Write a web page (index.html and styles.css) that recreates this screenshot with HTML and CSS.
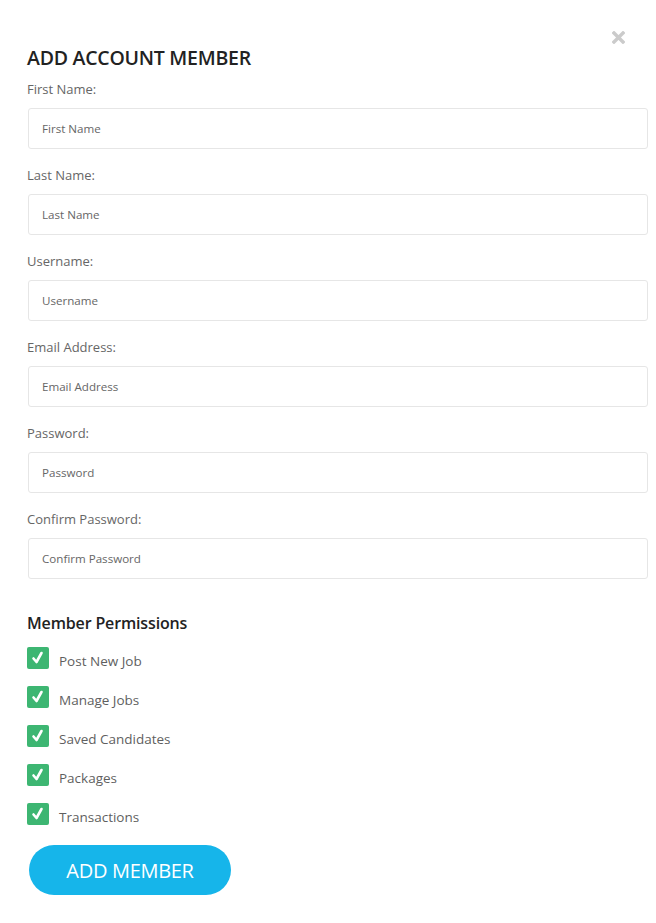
FILE: index.html
```html
<!DOCTYPE html>
<html lang="en">
<head>
    <meta charset="UTF-8">
    <meta name="viewport" content="width=device-width, initial-scale=1.0">
    <title>Add Account Member</title>
    <link rel="stylesheet" href="styles.css">
</head>
<body>

<div class="modal">
    <button class="close-button" type="button" aria-label="Close">
        <svg width="13" height="13" viewBox="0 0 13 13">
            <path d="M2 2 L11 11 M11 2 L2 11" stroke="#cbcbcb" stroke-width="3.4" stroke-linecap="square"/>
        </svg>
    </button>

    <form id="member-form">
        <h2 class="modal-title">ADD ACCOUNT MEMBER</h2>

        <div class="field">
            <label for="first-name">First Name:</label>
            <input type="text" id="first-name" placeholder="First Name">
        </div>
        <div class="field">
            <label for="last-name">Last Name:</label>
            <input type="text" id="last-name" placeholder="Last Name">
        </div>
        <div class="field">
            <label for="username">Username:</label>
            <input type="text" id="username" placeholder="Username">
        </div>
        <div class="field">
            <label for="email">Email Address:</label>
            <input type="email" id="email" placeholder="Email Address">
        </div>
        <div class="field">
            <label for="password">Password:</label>
            <input type="password" id="password" placeholder="Password">
        </div>
        <div class="field">
            <label for="confirm-password">Confirm Password:</label>
            <input type="password" id="confirm-password" placeholder="Confirm Password">
        </div>

        <h3 class="section-title">Member Permissions</h3>
        <div class="permissions">
            <label class="permission"><span class="check"><svg width="22" height="22" viewBox="0 0 22 22"><path d="M6.5 11.5 L9.5 15 L14.5 6" fill="none" stroke="#fff" stroke-width="2.6" stroke-linecap="round" stroke-linejoin="round"/></svg></span><span class="permission-text">Post New Job</span></label>
            <label class="permission"><span class="check"><svg width="22" height="22" viewBox="0 0 22 22"><path d="M6.5 11.5 L9.5 15 L14.5 6" fill="none" stroke="#fff" stroke-width="2.6" stroke-linecap="round" stroke-linejoin="round"/></svg></span><span class="permission-text">Manage Jobs</span></label>
            <label class="permission"><span class="check"><svg width="22" height="22" viewBox="0 0 22 22"><path d="M6.5 11.5 L9.5 15 L14.5 6" fill="none" stroke="#fff" stroke-width="2.6" stroke-linecap="round" stroke-linejoin="round"/></svg></span><span class="permission-text">Saved Candidates</span></label>
            <label class="permission"><span class="check"><svg width="22" height="22" viewBox="0 0 22 22"><path d="M6.5 11.5 L9.5 15 L14.5 6" fill="none" stroke="#fff" stroke-width="2.6" stroke-linecap="round" stroke-linejoin="round"/></svg></span><span class="permission-text">Packages</span></label>
            <label class="permission"><span class="check"><svg width="22" height="22" viewBox="0 0 22 22"><path d="M6.5 11.5 L9.5 15 L14.5 6" fill="none" stroke="#fff" stroke-width="2.6" stroke-linecap="round" stroke-linejoin="round"/></svg></span><span class="permission-text">Transactions</span></label>
        </div>

        <button type="submit" class="add-button">ADD MEMBER</button>
    </form>
</div>

</body>
</html>
```

FILE: styles.css
```css
/* Add member modal */
body {
    margin: 0;
    background-color: #fff;
    font-family: "Open Sans", "Liberation Sans", sans-serif;
}
.modal {
    position: relative;
    width: 620px;
    padding: 46px 8px 27px 27px;
}
.close-button {
    position: absolute;
    top: 31px;
    right: 30px;
    padding: 0;
    border: none;
    background: none;
    line-height: 0;
    cursor: pointer;
}
.modal-title {
    margin: 0 0 9px;
    font-size: 19.5px;
    line-height: 24px;
    font-weight: 600;
    letter-spacing: -0.25px;
    color: #222;
}
.field {
    margin-bottom: 16px;
}
.field label {
    display: block;
    font-size: 13px;
    line-height: 20px;
    color: #666;
}
.field input {
    display: block;
    box-sizing: border-box;
    width: 620px;
    height: 41px;
    margin: 9px 0 0 1px;
    padding: 0 13px;
    border: 1px solid #e6e6e6;
    border-radius: 3px;
    font-family: inherit;
    font-size: 11.6px;
    color: #666;
    outline: none;
}
.field input::placeholder {
    color: #666;
}
.section-title {
    margin: 33px 0 13px;
    font-size: 16px;
    line-height: 22px;
    font-weight: 600;
    letter-spacing: -0.15px;
    color: #222;
}
.permissions {
    display: flex;
    flex-direction: column;
    gap: 17px;
}
.permission {
    display: flex;
    align-items: flex-end;
    gap: 10px;
    font-size: 13.5px;
    color: #5f5f5f;
}
.check {
    width: 22px;
    height: 22px;
    border-radius: 2px;
    background-color: #3db672;
    line-height: 0;
}
.permission-text {
    line-height: 16px;
}
.add-button {
    display: block;
    width: 202px;
    height: 50px;
    margin: 20px 0 0 2px;
    border: none;
    border-radius: 25px;
    background-color: #16b5ea;
    color: #fff;
    font-family: inherit;
    font-size: 20px;
    letter-spacing: -0.3px;
    cursor: pointer;
}
```
